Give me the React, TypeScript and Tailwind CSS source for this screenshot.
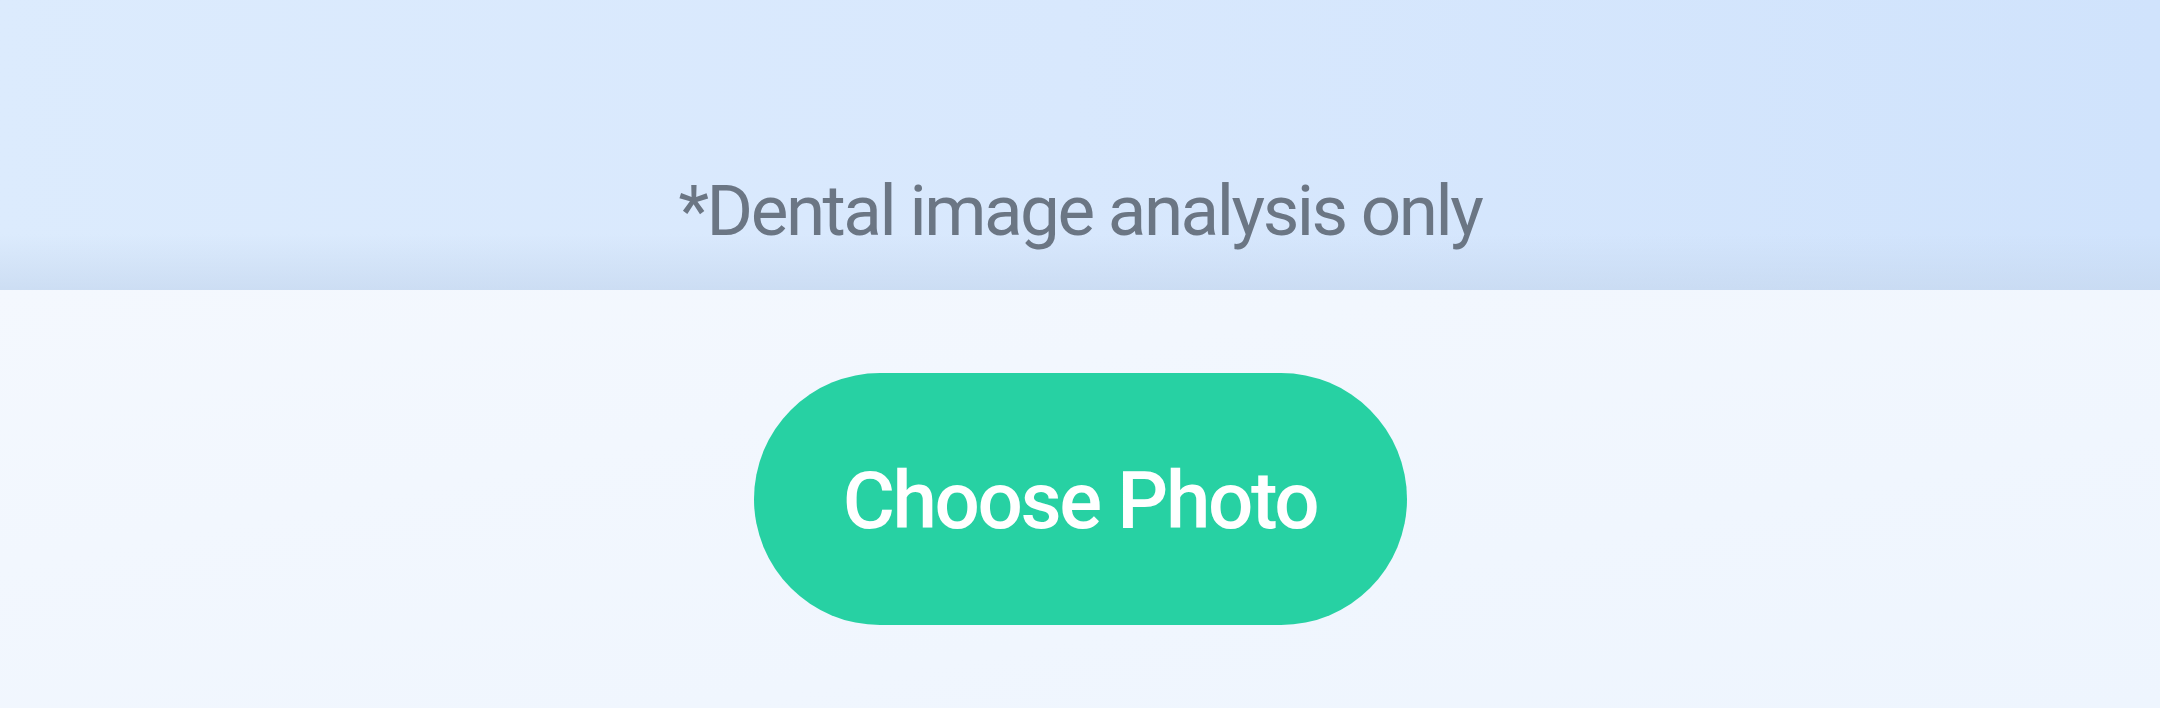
export default function App() {
  return (
    <div className="w-[2160px] h-[708px] flex flex-col overflow-hidden font-['Roboto','Noto_Sans',sans-serif]">
      {/* header band */}
      <div className="relative h-[290px] shrink-0 bg-gradient-to-r from-[#dcebfd] via-[#d8e8fd] to-[#d0e3fc] flex flex-col items-center justify-end pb-[44px]">
        <div className="absolute inset-x-0 bottom-0 h-[56px] bg-gradient-to-b from-transparent to-[#c6d8ef]/70" />
        <p className="relative text-[71px] leading-none text-[#6b7684] tracking-[-0.035em]">
          *Dental image analysis only
        </p>
      </div>

      {/* action area */}
      <div className="flex-1 bg-gradient-to-br from-[#f4f8fe] to-[#eef5fe] flex items-center justify-center">
        <button className="w-[653px] h-[252px] rounded-full bg-[#27d1a3] text-white text-[80px] font-medium leading-none tracking-[-0.03em] pt-[4px]">
          Choose Photo
        </button>
      </div>
    </div>
  );
}
